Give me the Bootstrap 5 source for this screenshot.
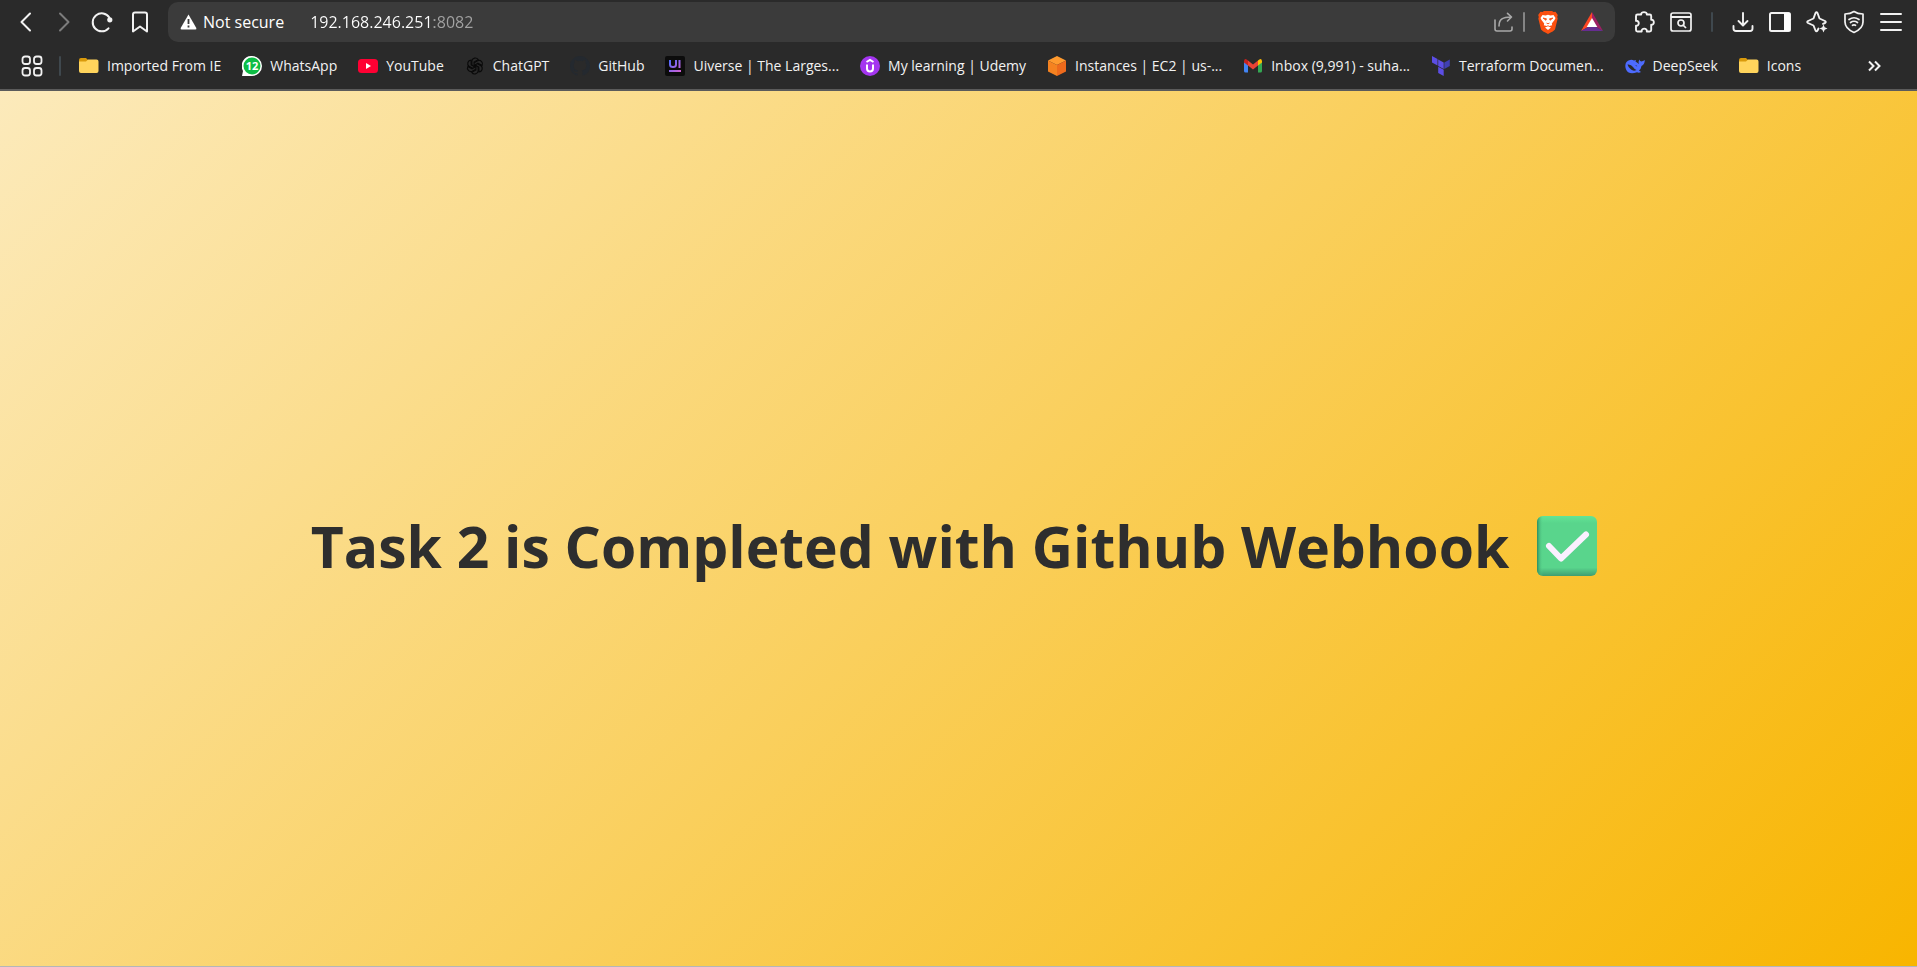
<!DOCTYPE html>
<html lang="en">
<head>
<meta charset="utf-8">
<meta name="viewport" content="width=device-width, initial-scale=1">
<title>Task 2</title>
<link href="https://cdn.jsdelivr.net/npm/bootstrap@5.3.0/dist/css/bootstrap.min.css" rel="stylesheet">
<style>
  body { font-family: "Open Sans", "Noto Sans", sans-serif; background: #2a2a2a; color: #f2f2f2; }
  svg { display: block; flex: none; }
  .toolbar { height: 44px; padding: 2px 15px; }
  .tool { width: 22px; height: 40px; padding: 0; border: 0; background: none; color: #f2f2f2; display: flex; align-items: center; justify-content: center; flex: none; }
  .tool.off { color: #7c7c7c; }
  .tool.soft { color: #a9a9a9; }
  .rule { width: 2px; height: 20px; background: #3f484e; border-radius: 1px; flex: none; }
  .nav-tools { gap: 16px; }
  .side-tools { gap: 15px; }
  .side-tools .rule { margin: 0 4px; }
  .address { height: 40px; margin: 0 18px 0 17px; padding: 0 12px; background: #3b3b3b; border-radius: 10px; font-size: 16px; }
  .address .rule { background: #858585; }
  .rewards { margin-left: 22px; }
  .secure { color: #fff; background: none; border: 0; padding: 0; gap: 6px; white-space: nowrap; }
  .url { border: 0; outline: 0; padding: 0; margin-left: 26px; min-width: 0; color: #fff; -webkit-text-fill-color: transparent; background: linear-gradient(90deg, #fff 124px, #a3a3a3 124px); -webkit-background-clip: text; background-clip: text; }
  .bookmarks { height: 45px; padding: 0 32px 2px 21px; font-size: 14px; }
  .bookmarks a { color: #f2f2f2; text-decoration: none; gap: 8px; white-space: nowrap; }
  .bookmark-list { gap: 21px; margin-left: 18px; }
  .page { border-top: 2px solid #5b5b5b; border-bottom: 1px solid #b3b6ba; background: linear-gradient(135deg, #fceabb, #f8b500); color: #2e2e2e; padding: 34px 8px 0 0; }
  .page h1 { font-size: 57px; line-height: 80px; font-weight: 700; margin: 0; gap: 27px; }
</style>
</head>
<body class="d-flex flex-column min-vh-100">
<header>
  <div class="toolbar d-flex align-items-center">
    <div class="nav-tools d-flex">
      <button class="tool" aria-label="Back"><svg width="22" height="22" fill="none" stroke="currentColor" stroke-width="2" stroke-linecap="round" stroke-linejoin="round"><path d="M15 2.500L6.500 11l8.500 8.500"/></svg></button>
      <button class="tool off" aria-label="Forward"><svg width="22" height="22" fill="none" stroke="currentColor" stroke-width="2" stroke-linecap="round" stroke-linejoin="round"><path d="M7 2.500l8.500 8.500L7 19.500"/></svg></button>
      <button class="tool" aria-label="Reload"><svg width="22" height="22" fill="none" stroke="currentColor" stroke-width="2" stroke-linecap="round"><path d="M17.500 17.300A9 9 0 1 1 18.300 6.500"/><circle cx="18.800" cy="8.800" r="2.600" fill="currentColor" stroke="none"/></svg></button>
      <button class="tool" aria-label="Bookmark this page"><svg width="22" height="22" fill="none" stroke="currentColor" stroke-width="2" stroke-linejoin="round"><path d="M4 3.500Q4 1.500 6 1.500h10q2 0 2 2v17l-7-5-7 5z"/></svg></button>
    </div>
    <div class="address d-flex align-items-center flex-grow-1">
      <button class="secure d-flex align-items-center"><svg width="17" height="16"><path d="M8.500 0.500L16.300 14q.5 1.500-1 1.500H1.700q-1.500 0-1-1.500z" fill="#fff"/><path d="M8.500 5v5M8.500 11.500v2" stroke="#3b3b3b" stroke-width="1.800"/></svg>Not secure</button>
      <input class="url flex-grow-1" type="text" aria-label="Address" value="192.168.246.251:8082">
      <button class="tool soft" aria-label="Share"><svg width="22" height="22" fill="none" stroke="currentColor" stroke-width="1.600" stroke-linecap="round" stroke-linejoin="round"><path d="M2 9v9q0 2 2 2h13q2 0 2-2v-2M6 15c0-7 4-9 12-9M14.500 2.300L18.500 6l-4 4"/></svg></button>
      <span class="rule mx-2"></span>
      <button class="tool ms-1" aria-label="Brave Shields"><svg width="20" height="23" viewBox="0 0 20 23"><path d="M4.500 1L6 0h8l1.500 1 2-.2L19.800 4l-.6 2 .5 1.500-2.700 11Q16 20 10 23 4 20 3 18.500L.3 7.500.8 6 .2 4 2.500.8z" fill="#fb5010"/><path d="M4.500 4l3 .5L10 3.700l2.500.8 3-.5L17.500 7l-1 2-2.700 3.500.4 1.800-3 .8L10 14.200l-1.200.9-3-.8.400-1.800L3.500 9l-1-2z" fill="#fff"/><path d="M10 15.200l3 1.300-3 2.500-3-2.500z" fill="#fff"/><path d="M5 7l3.500.8-.6 1.500zM15 7l-3.500.8.6 1.500zM8.500 12l1.500.8 1.500-.8" stroke="#fb5010" stroke-width=".8" fill="#fb5010"/></svg></button>
      <button class="tool rewards" aria-label="Rewards"><svg width="22" height="20" viewBox="0 0 22 20"><path d="M11 0L0 19l7-4 4-8z" fill="#ff4724"/><path d="M11 0l11 19-7-4-4-8z" fill="#9e1f63"/><path d="M0 19l7-4h8l7 4z" fill="#662d91"/><path d="M11 6l5.300 9H5.700z" fill="#fff"/></svg></button>
    </div>
    <div class="side-tools d-flex align-items-center">
      <button class="tool" aria-label="Extensions"><svg width="22" height="22" fill="none" stroke="currentColor" stroke-width="1.900" stroke-linejoin="round"><path d="M4.500 3.500h3.700C7.400.3 14.600.3 13.800 3.500h2.900q1.500 0 1.500 1.500v3.800c3.500-.6 3.500 5.600 0 5V19q0 1.500-1.500 1.500h-2.900c.7-3.800-5.800-3.800-5.100 0H4.500Q3 20.500 3 19v-4.200c3.700.3 3.700-5.300 0-5V5q0-1.500 1.500-1.500z"/></svg></button>
      <button class="tool" aria-label="Search page"><svg width="22" height="22" fill="none" stroke="currentColor" stroke-width="1.700"><rect x="1" y="2" width="20" height="18" rx="2"/><path d="M1 6h20" stroke-width="2"/><circle cx="11" cy="12" r="3"/><path d="M13 14l3 3"/></svg></button>
      <span class="rule"></span>
      <button class="tool" aria-label="Downloads"><svg width="22" height="22" fill="none" stroke="currentColor" stroke-width="1.900" stroke-linecap="round" stroke-linejoin="round"><path d="M11 2v12M6.500 10l4.500 4.500 4.500-4.500M1.500 15v2.500q0 2.500 2.500 2.500h14q2.500 0 2.500-2.500V15"/></svg></button>
      <button class="tool" aria-label="Sidebar"><svg width="22" height="22"><rect x="1" y="2" width="20" height="18" rx="1.500" fill="none" stroke="currentColor" stroke-width="2"/><path d="M15 2h6v18h-6z" fill="#fff"/></svg></button>
      <button class="tool" aria-label="Leo AI"><svg width="22" height="22" fill="none" stroke="currentColor" stroke-width="1.900" stroke-linecap="round" stroke-linejoin="round"><path d="M12.500 17.500l-1 2q-1 1.500-2 0l-2-5-5.500-2.500q-1.500-1 0-2L7.500 7.500l2-5.500q1-1.500 2 0l2 5.500L19 10q1.500 1 0 2l-2 .8"/><path d="M17.500 13.500l1.200 2.800 2.800 1.200-2.800 1.200-1.200 2.800-1.200-2.800-2.800-1.200 2.800-1.200z" fill="currentColor" stroke="none"/></svg></button>
      <button class="tool" aria-label="VPN"><svg width="22" height="24" fill="none" stroke="currentColor" stroke-width="1.700" stroke-linecap="round" stroke-linejoin="round"><path d="M11 1.500Q14.500 4 20 4v8q0 6.500-9 10.500Q2 18.500 2 12V4q5.500 0 9-2.500z"/><path d="M6 9.500q5-3.500 10 0M7.500 12.500q3.500-2.500 7 0M9.500 15.300q1.500-1 3 0"/></svg></button>
      <button class="tool" aria-label="Menu"><svg width="22" height="22" stroke="currentColor" stroke-width="2" stroke-linecap="round"><path d="M1 3h20M1 11h20M1 19h20"/></svg></button>
    </div>
  </div>
  <nav class="bookmarks d-flex align-items-center" aria-label="Bookmarks">
    <button class="tool" aria-label="All bookmarks"><svg width="22" height="22" fill="none" stroke="currentColor" stroke-width="1.800"><rect x="1.500" y="1.500" width="7.500" height="7.500" rx="2.500"/><rect x="13" y="1.500" width="7.500" height="7.500" rx="2.500"/><rect x="1.500" y="13" width="7.500" height="7.500" rx="2.500"/><rect x="13" y="13" width="7.500" height="7.500" rx="2.500"/></svg></button>
    <span class="rule ms-3"></span>
    <div class="bookmark-list d-flex flex-grow-1">
      <a href="#" class="d-flex align-items-center"><svg width="20" height="20"><path d="M0 4q0-2 2-2h5l2 2h9v6H0z" fill="#d99a0b"/><path d="M0 5.500h7L9 3.500h8.500q2 0 2 2V15q0 2-2 2H2q-2 0-2-2z" fill="#ffd45c"/></svg>Imported From IE</a>
      <a href="#" class="d-flex align-items-center"><svg width="20" height="20"><path d="M10 0a10 10 0 1 1 0 20H0l1-5A10 10 0 0 1 10 0z" fill="#fff"/><circle cx="10" cy="10" r="8.500" fill="#0dbd45"/><text x="10" y="14" text-anchor="middle" font-size="11" font-weight="700" fill="#fff">12</text></svg>WhatsApp</a>
      <a href="#" class="d-flex align-items-center"><svg width="20" height="20"><rect y="3" width="20" height="14" rx="3.500" fill="#ff0033"/><path d="M8 7l5 3-5 3z" fill="#fff"/></svg>YouTube</a>
      <a href="#" class="d-flex align-items-center"><svg width="20" height="20" viewBox="-11 -11 22 22" fill="none" stroke="#0a0a0a" stroke-width="1.300"><g id="petal"><path d="M-3.500-1V-5.500a3.800 3.800 0 0 1 7-1.500L-1-4.300V1"/></g><use href="#petal" transform="rotate(60)"/><use href="#petal" transform="rotate(120)"/><use href="#petal" transform="rotate(180)"/><use href="#petal" transform="rotate(240)"/><use href="#petal" transform="rotate(300)"/></svg>ChatGPT</a>
      <a href="#" class="d-flex align-items-center"><svg width="20" height="20" viewBox="0 0 16 16"><path fill="#24292f" d="M8 0C3.580 0 0 3.580 0 8c0 3.540 2.290 6.530 5.470 7.590.4.070.55-.17.55-.38 0-.19-.01-.82-.01-1.490-2.010.37-2.530-.49-2.690-.94-.09-.23-.48-.94-.82-1.130-.28-.15-.68-.52-.01-.53.63-.01 1.080.58 1.230.82.72 1.210 1.870.87 2.330.66.07-.52.28-.87.51-1.070-1.780-.2-3.640-.89-3.640-3.950 0-.87.31-1.590.82-2.150-.08-.2-.36-1.020.08-2.120 0 0 .67-.21 2.200.82a7.400 7.400 0 0 1 4 0c1.530-1.040 2.200-.82 2.200-.82.44 1.100.16 1.920.08 2.120.51.56.82 1.270.82 2.150 0 3.070-1.870 3.750-3.650 3.950.29.25.54.73.54 1.480 0 1.070-.01 1.930-.01 2.200 0 .21.15.46.55.38A8 8 0 0 0 16 8c0-4.420-3.580-8-8-8z"/></svg>GitHub</a>
      <a href="#" class="d-flex align-items-center"><svg width="20" height="20"><defs><linearGradient id="uv" gradientUnits="userSpaceOnUse" x1="4" y1="4" x2="16" y2="16"><stop stop-color="#4a6bff"/><stop offset="1" stop-color="#d95fd0"/></linearGradient></defs><rect width="20" height="20" rx="2" fill="#0c0c0c"/><path d="M5 4v4.500q0 2.500 3 2.500t3-2.500V4M14.500 4v8M4 15h12" fill="none" stroke="url(#uv)" stroke-width="2"/></svg>Uiverse | The Larges...</a>
      <a href="#" class="d-flex align-items-center"><svg width="20" height="20"><circle cx="10" cy="10" r="10" fill="#a435f0"/><path d="M6.500 6L10 4l3.500 2M7 8.500v4q0 3 3 3t3-3v-4" fill="none" stroke="#fff" stroke-width="2"/></svg>My learning | Udemy</a>
      <a href="#" class="d-flex align-items-center"><svg width="20" height="20"><path d="M10 0l9 4.500-9 4.500-9-4.500z" fill="#ff9a2e"/><path d="M1 4.500L10 9v11l-9-4.500z" fill="#f58220"/><path d="M19 4.500L10 9v11l9-4.500z" fill="#ee6a1c"/></svg>Instances | EC2 | us-...</a>
      <a href="#" class="d-flex align-items-center"><svg width="20" height="20"><path d="M1 5v10q0 1.500 1.500 1.500H5V8z" fill="#4285f4"/><path d="M19 5v10q0 1.500-1.500 1.500H15V8z" fill="#34a853"/><path d="M5 4.500l5 4 5-4v5l-5 4-5-4z" fill="#ea4335"/><path d="M1 5q.5-3 3-1.300L5 4.500v5L1 6.500z" fill="#c5221f"/><path d="M19 5q-.5-3-3-1.300l-1 .8v5l4-3z" fill="#fbbc04"/></svg>Inbox (9,991) - suha...</a>
      <a href="#" class="d-flex align-items-center"><svg width="20" height="20"><path d="M1 0l5.500 3v6.500L1 6.500zM7.200 3.500l5.500 3V13l-5.500-3zM7.200 10.800l5.500 3V20l-5.500-3z" fill="#5c4ee5"/><path d="M13.300 6.500l5.500-3V10l-5.500 3z" fill="#4040b2"/></svg>Terraform Documen...</a>
      <a href="#" class="d-flex align-items-center"><svg width="20" height="20"><path d="M.3 10Q.3 5 5 4q2-.5 4 .5l2-.5-.5 1.500L14 8q-1-2.500.5-4.500.3 1.500 1.700 2Q18 5 19.800 4q0 4.500-3.300 6-.5 3-2.500 4.500l2 1.500q-2 1.200-4 .3Q4 19 1.300 14 .3 12 .3 10z" fill="#4d6bfe"/><path d="M2.500 8.500q3.500-.5 5.500 2.500t3.500 3q-3 1.500-5.500-.5-3-2.500-3.500-5zM10 9q2 0 2.300 1.800" fill="#2a2a2a"/></svg>DeepSeek</a>
      <a href="#" class="d-flex align-items-center"><svg width="20" height="20"><path d="M0 4q0-2 2-2h5l2 2h9v6H0z" fill="#d99a0b"/><path d="M0 5.500h7L9 3.500h8.500q2 0 2 2V15q0 2-2 2H2q-2 0-2-2z" fill="#ffd45c"/></svg>Icons</a>
    </div>
    <button class="tool" aria-label="More bookmarks"><svg width="14" height="12" fill="none" stroke="currentColor" stroke-width="2"><path d="M2 1.500L6.500 6 2 10.500M8 1.500L12.500 6 8 10.500"/></svg></button>
  </nav>
</header>
<main class="page flex-grow-1 d-flex align-items-center justify-content-center">
  <h1 class="d-flex align-items-center">Task 2 is Completed with Github Webhook
    <svg width="62" height="60" role="img" aria-label="Done"><defs><linearGradient id="shade" x2="0" y2="1"><stop stop-color="#62e495"/><stop offset=".12" stop-color="#59d58c"/><stop offset=".86" stop-color="#59d58c"/><stop offset="1" stop-color="#3f9d72"/></linearGradient><linearGradient id="edge"><stop stop-color="#2f8c60"/><stop offset=".1" stop-color="#59d58c" stop-opacity="0"/></linearGradient></defs><rect x="1" width="60" height="60" rx="6" fill="url(#shade)"/><rect x="1" width="60" height="60" rx="6" fill="url(#edge)"/><path d="M13 30L25 42.500 50 18.500" fill="none" stroke="#faf0ff" stroke-width="6" stroke-linecap="round" stroke-linejoin="round"/></svg>
  </h1>
</main>
<script src="https://cdn.jsdelivr.net/npm/bootstrap@5.3.0/dist/js/bootstrap.bundle.min.js"></script>
</body>
</html>
